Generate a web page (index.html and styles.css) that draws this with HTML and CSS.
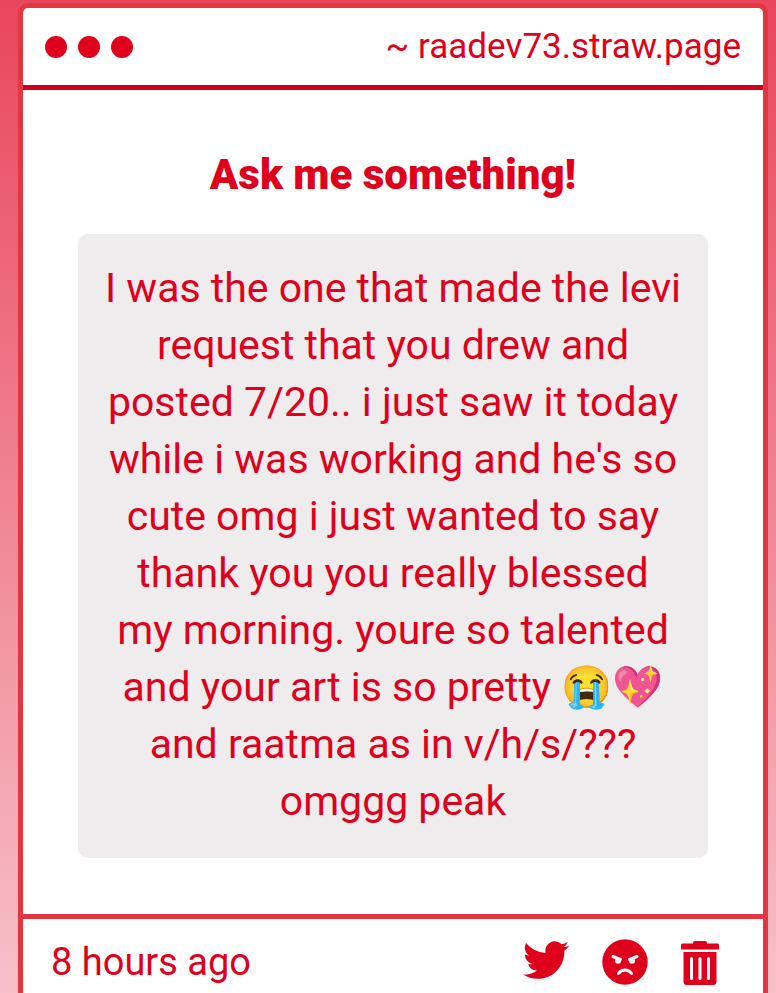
FILE: index.html
```
<!DOCTYPE html>
<html lang="en">

<head>
	<meta charset="utf-8">
	<meta name="viewport" content="width=device-width, initial-scale=1">
	<title>Ask me something!</title>
	<link rel="stylesheet" href="styles.css">
</head>

<body>
	<main class="card">
		<header class="card-top">
			<div class="dots">
				<span class="dot"></span>
				<span class="dot"></span>
				<span class="dot"></span>
			</div>
			<a class="site" href="#">~ raadev73.straw.page</a>
		</header>
		<section class="card-body">
			<h1 class="title">Ask me something!</h1>
			<p class="message">
				I was the one that made the levi<br>
				request that you drew and<br>
				posted 7/20.. i just saw it today<br>
				while i was working and he's so<br>
				cute omg i just wanted to say<br>
				thank you you really blessed<br>
				my morning. youre so talented<br>
				and your art is so pretty 😭💖<br>
				and raatma as in v/h/s/???<br>
				omggg peak
			</p>
		</section>
		<footer class="card-bottom">
			<span class="time">8 hours ago</span>
			<div class="actions">
				<button class="action" type="button" aria-label="Share on Twitter">
					<svg class="icon" viewBox="0 0 46 46">
						<path transform="translate(0 -2) scale(1.92)" d="M23.953 4.57a10 10 0 01-2.825.775 4.958 4.958 0 002.163-2.723c-.951.555-2.005.959-3.127 1.184a4.92 4.92 0 00-8.384 4.482C7.69 8.095 4.067 6.13 1.64 3.162a4.822 4.822 0 00-.666 2.475c0 1.71.87 3.213 2.188 4.096a4.904 4.904 0 01-2.228-.616v.06a4.923 4.923 0 003.946 4.827 4.996 4.996 0 01-2.212.085 4.936 4.936 0 004.604 3.417 9.867 9.867 0 01-6.102 2.105c-.39 0-.779-.023-1.17-.067a13.995 13.995 0 007.557 2.209c9.053 0 13.998-7.496 13.998-13.985 0-.21 0-.42-.015-.63A9.935 9.935 0 0024 4.59z"/>
					</svg>
				</button>
				<button class="action" type="button" aria-label="Block">
					<svg class="icon" viewBox="0 0 46 46">
						<circle cx="23" cy="23" r="22.7"/>
						<g class="face">
							<path d="M11 17.5l7.5 3M35 17.5l-7.5 3"/>
							<path d="M16.5 34.5c3.2-4.6 9.8-4.6 13 0"/>
						</g>
						<circle class="eye" cx="16" cy="21.7" r="3"/>
						<circle class="eye" cx="30" cy="21.7" r="3"/>
					</svg>
				</button>
				<button class="action" type="button" aria-label="Delete">
					<svg class="icon icon-trash" viewBox="4 0 38 46">
						<path d="M5.5 4.500H16v-.5q0-2 2-2h10q2 0 2 2v.5h10.500q1.500 0 1.500 1.500v4.500H4V6q0-1.500 1.500-1.500z"/>
						<path d="M6.500 13h33v29.500q0 3.500-3.500 3.500H10q-3.500 0-3.500-3.500z"/>
						<path class="bars" d="M14.500 19.500v20M23 19.500v20M31.500 19.500v20"/>
					</svg>
				</button>
			</div>
		</footer>
	</main>
</body>

</html>
```
FILE: styles.css
```
* {
	box-sizing: border-box;
}

body {
	margin: 0;
	height: 100vh;
	padding: 3px 8px 0 18px;
	overflow: hidden;
	background: linear-gradient(#e9465c, #f7c1c9);
	color: #df001c;
	font-family: Roboto, "Liberation Sans", sans-serif;
}

.card {
	border: 5px solid #e23641;
	border-radius: 10px;
	background: #fff;
}

.card-top {
	display: flex;
	align-items: center;
	justify-content: space-between;
	height: 82px;
	padding: 0 22px;
	border-bottom: 5px solid #d6001c;
}

.dots {
	display: flex;
	gap: 11px;
}

.dot {
	width: 22px;
	height: 22px;
	border-radius: 50%;
	background: #df001c;
}

.site {
	color: inherit;
	font-size: 35px;
	text-decoration: none;
}

.card-body {
	padding: 56px 55px;
}

.title {
	margin: 0 0 30px;
	font-size: 42px;
	font-weight: 900;
	line-height: 58px;
	text-align: center;
}

.message {
	margin: 0;
	padding: 26px 0 28px;
	border-radius: 10px;
	background: #eeecec;
	font-size: 41px;
	line-height: 57px;
	text-align: center;
}

.card-bottom {
	display: flex;
	align-items: center;
	justify-content: space-between;
	height: 90px;
	padding: 0 44px 0 28px;
	border-top: 5px solid #e23641;
}

.time {
	font-size: 38px;
}

.actions {
	display: flex;
	gap: 33px;
}

.action {
	padding: 0;
	border: 0;
	background: none;
	color: inherit;
	cursor: pointer;
}

.icon {
	display: block;
	width: 46px;
	height: 46px;
	fill: currentColor;
}

.icon-trash {
	width: 38px;
}

.face,
.bars {
	fill: none;
	stroke: #fff;
	stroke-width: 3;
	stroke-linecap: round;
}

.eye {
	fill: #fff;
}
```
